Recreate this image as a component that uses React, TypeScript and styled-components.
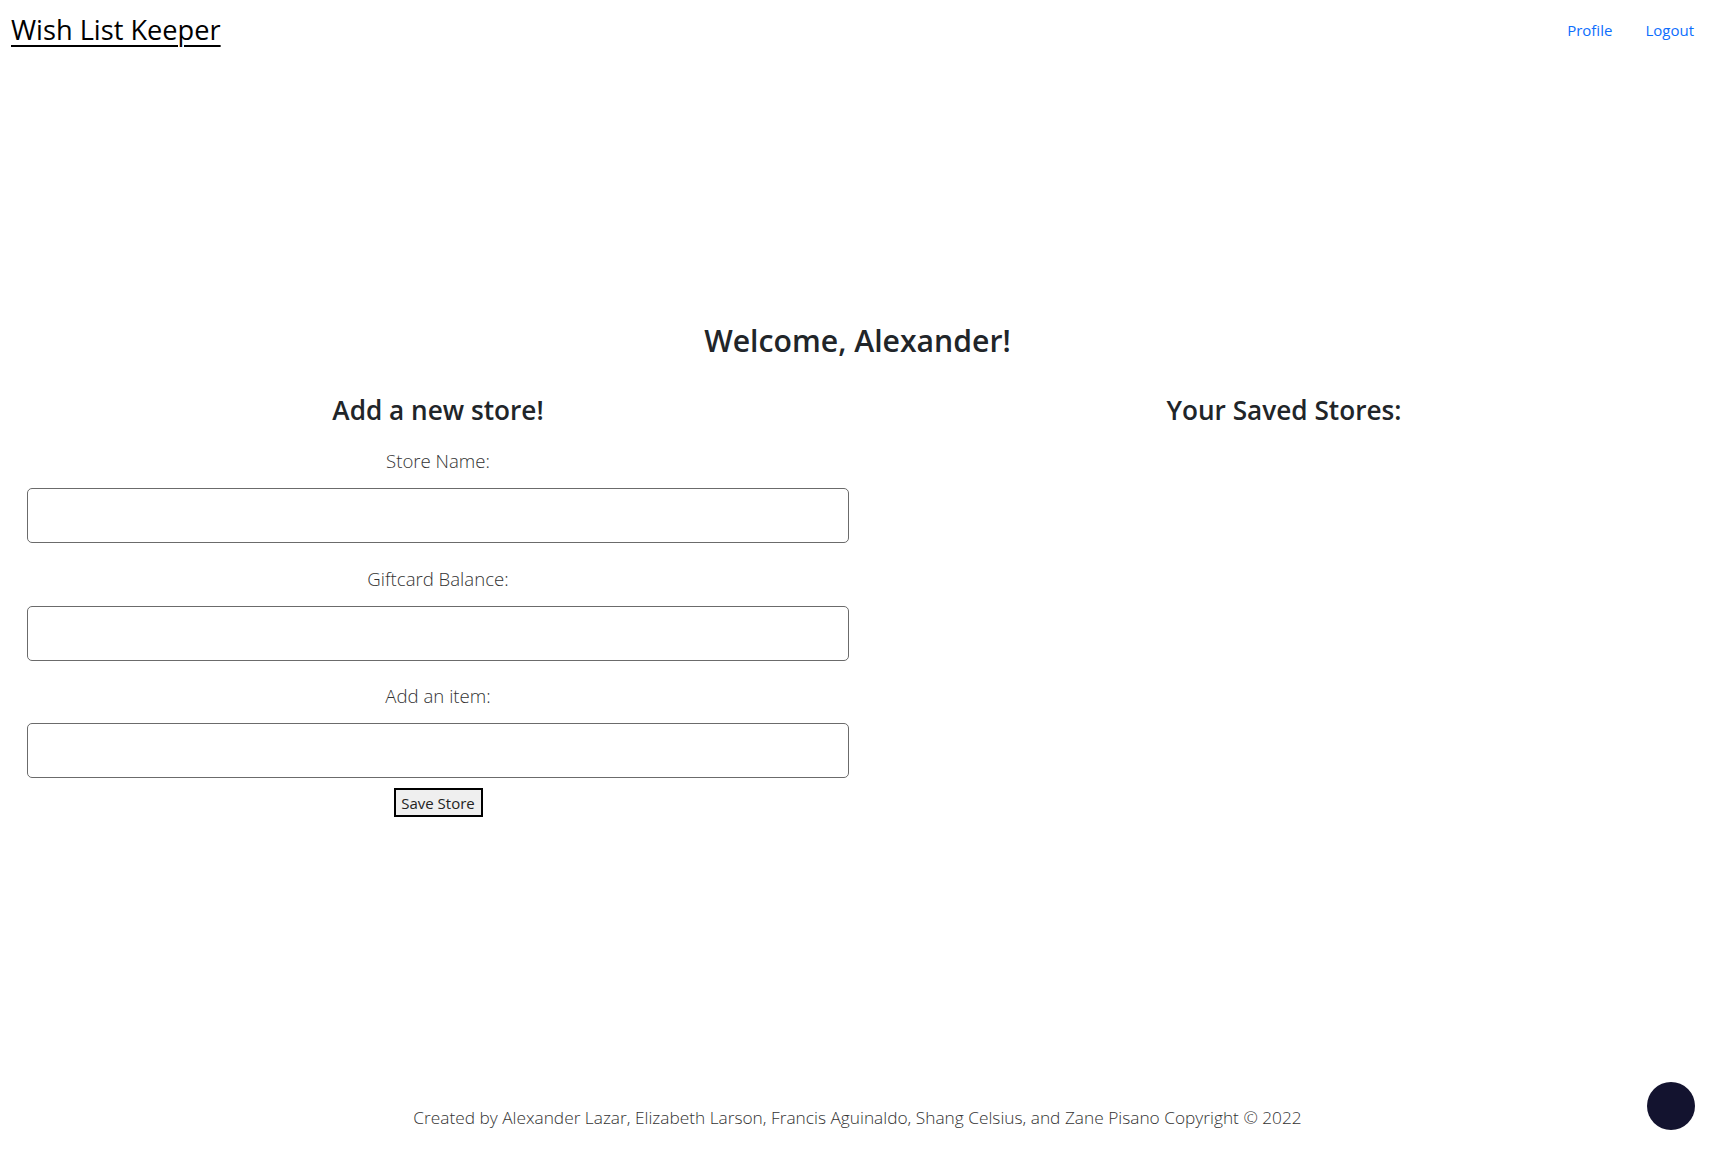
import React from "react";
import styled, { createGlobalStyle } from "styled-components";

const GlobalStyle = createGlobalStyle`
  html, body { margin: 0; padding: 0; }
  body {
    font-family: "Open Sans", "Noto Sans", sans-serif;
    color: #212529;
    background: #fff;
  }
  * { box-sizing: border-box; }
`;

const Page = styled.div`
  min-height: 100vh;
  display: flex;
  flex-direction: column;
`;

const Header = styled.header`
  display: flex;
  justify-content: space-between;
  align-items: flex-start;
  padding: 11px 21px 0 11px;
`;

const Brand = styled.a`
  font-size: 27.2px;
  line-height: 38px;
  color: #000;
  text-decoration: underline;
  text-underline-offset: 5px;
  text-decoration-thickness: 2px;
`;

const Nav = styled.nav`
  display: flex;
  gap: 33px;
  padding-top: 7px;
`;

const NavLink = styled.a`
  font-size: 15px;
  line-height: 24px;
  color: #0d6efd;
  text-decoration: none;
`;

const Main = styled.main`
  flex: 1;
  padding-top: 273px;
`;

const Welcome = styled.h2`
  margin: 0 0 36px;
  text-align: center;
  font-size: 30.2px;
  line-height: 38px;
  font-weight: 600;
  color: #212529;
`;

const Columns = styled.div`
  display: grid;
  grid-template-columns: 822px 822px;
  column-gap: 24px;
  padding: 0 20px 0 27px;
`;

const Column = styled.section`
  display: flex;
  flex-direction: column;
  align-items: stretch;
`;

const SectionTitle = styled.h4`
  margin: 0 0 22px;
  text-align: center;
  font-size: 26.2px;
  line-height: 29px;
  font-weight: 600;
  color: #212529;
`;

const Field = styled.div`
  display: flex;
  flex-direction: column;
  & + & { margin-top: 21.5px; }
`;

const Label = styled.label`
  display: block;
  text-align: center;
  font-size: 18.6px;
  line-height: 27px;
  margin-bottom: 14px;
  color: #333;
  font-weight: 300;
`;

const Input = styled.input`
  height: 55px;
  width: 100%;
  border: 1px solid #6b6b6b;
  border-radius: 5px;
  padding: 6px 12px;
  font-size: 16px;
  background: #fff;
`;

const SaveButton = styled.button`
  align-self: center;
  margin-top: 10px;
  width: 89px;
  height: 29px;
  padding: 0;
  border: 2px solid #000;
  background: #efefef;
  font-family: inherit;
  font-size: 15px;
  color: #222;
`;

const Footer = styled.footer`
  text-align: center;
  font-size: 17.3px;
  line-height: 24px;
  font-weight: 300;
  color: #333;
  padding: 0 0 25px;
`;

const Bubble = styled.div`
  position: fixed;
  right: 20px;
  bottom: 25px;
  width: 48px;
  height: 48px;
  border-radius: 50%;
  background: #13132f;
`;

export default function App() {
  return (
    <Page>
      <GlobalStyle />
      <Header>
        <Brand href="#">Wish List Keeper</Brand>
        <Nav>
          <NavLink href="#">Profile</NavLink>
          <NavLink href="#">Logout</NavLink>
        </Nav>
      </Header>
      <Main>
        <Welcome>Welcome, Alexander!</Welcome>
        <Columns>
          <Column>
            <SectionTitle>Add a new store!</SectionTitle>
            <Field>
              <Label>Store Name:</Label>
              <Input type="text" />
            </Field>
            <Field>
              <Label>Giftcard Balance:</Label>
              <Input type="text" />
            </Field>
            <Field>
              <Label>Add an item:</Label>
              <Input type="text" />
            </Field>
            <SaveButton type="button">Save Store</SaveButton>
          </Column>
          <Column>
            <SectionTitle>Your Saved Stores:</SectionTitle>
          </Column>
        </Columns>
      </Main>
      <Footer>
        Created by Alexander Lazar, Elizabeth Larson, Francis Aguinaldo, Shang Celsius, and Zane Pisano Copyright © 2022
      </Footer>
      <Bubble />
    </Page>
  );
}
